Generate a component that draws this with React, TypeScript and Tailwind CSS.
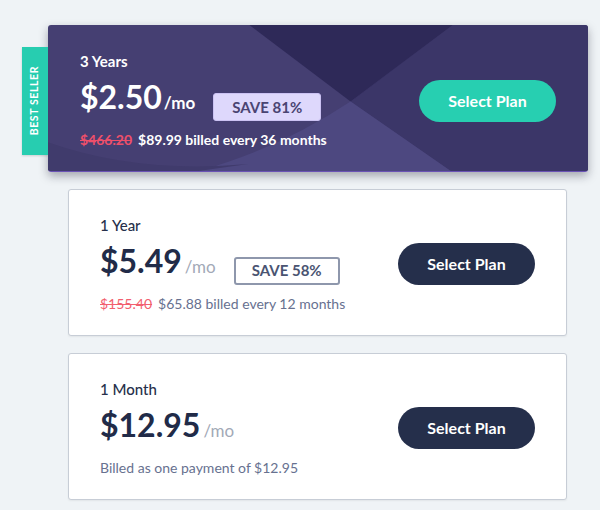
import React from 'react';

type Plan = {
  label: string;
  price: string;
  save?: string;
  old?: string;
  billed: string;
};

const plans: Plan[] = [
  { label: '1 Year', price: '$5.49', save: 'SAVE 58%', old: '$155.40', billed: '$65.88 billed every 12 months' },
  { label: '1 Month', price: '$12.95', billed: 'Billed as one payment of $12.95' },
];

function CardBackground() {
  return (
    <svg className="absolute inset-0 h-full w-full" viewBox="0 0 539 147" preserveAspectRatio="none">
      <rect width="539" height="147" fill="#453f72" />
      <path d="M404,0 L539,0 L539,147 L402,147 L302,77 Z" fill="#3b3668" />
      <path d="M201,0 L404,0 L302,77 Z" fill="#2e2958" />
      <path d="M302,77 L402,147 L150,147 Q230,125 302,77 Z" fill="#4d4880" />
      <path d="M0,118 Q90,150 200,140 L150,147 L0,147 Z" fill="#403b6c" />
    </svg>
  );
}

function SelectButton({ featured }: { featured?: boolean }) {
  return (
    <button
      className={
        featured
          ? 'mt-[2px] h-[42px] w-[137px] shrink-0 rounded-full bg-[#27cfb1] text-[16px] font-bold text-white'
          : 'mt-[1px] h-[42px] w-[137px] shrink-0 rounded-full bg-[#252f4b] text-[16px] font-bold text-white'
      }
    >
      Select Plan
    </button>
  );
}

function FeaturedCard() {
  return (
    <div className="relative -ml-[20px] -mr-[21px] h-[147px] rounded-[3px] shadow-[0_4px_10px_rgba(20,20,40,0.35)]">
      <div className="absolute -left-[26px] top-[22px] flex h-[108px] w-[26px] items-center justify-center bg-[#27cdb0] shadow-[0_1px_2px_rgba(0,0,0,0.15)]">
        <span className="rotate-180 text-[10.5px] font-bold tracking-[0.6px] text-white [writing-mode:vertical-rl]">
          BEST SELLER
        </span>
      </div>
      <div className="relative h-full overflow-hidden rounded-[3px] border-b border-[#6a52b5]">
        <CardBackground />
        <div className="relative flex h-full items-center justify-between px-[32px] pt-[4px]">
          <div className="flex flex-col">
            <div className="text-[15px] font-bold leading-[20px] text-white">3 Years</div>
            <div className="mt-[6px] flex items-end">
              <div className="flex items-baseline leading-[40px]">
                <span className="text-[32px] font-bold text-white">$2.50</span>
                <span className="ml-[2px] text-[17px] font-bold text-white">/mo</span>
              </div>
              <div className="mb-[2px] ml-[18px] flex h-[28px] w-[108px] items-center justify-center rounded-[3px] border border-[#cbc2f3] bg-[#ded8fc] text-[15px] font-bold text-[#4a4472]">
                SAVE 81%
              </div>
            </div>
            <div className="mt-[8px] flex text-[14px] font-bold leading-[18px]">
              <span className="text-[#ee4f6a] line-through">$466.20</span>
              <span className="ml-[6px] text-white">$89.99 billed every 36 months</span>
            </div>
          </div>
          <SelectButton featured />
        </div>
      </div>
    </div>
  );
}

function PlanCard({ plan }: { plan: Plan }) {
  return (
    <div className="flex h-[147px] items-center justify-between rounded-[3px] border border-[#c7cdd6] bg-white px-[31px] pt-[2px] shadow-[0_1px_2px_rgba(0,0,0,0.06)]">
      <div className="flex flex-col">
        <div className="text-[15px] font-medium leading-[20px] text-[#27304b]">{plan.label}</div>
        <div className="mt-[6px] flex items-end">
          <div className="flex items-baseline leading-[40px]">
            <span className="text-[32px] font-bold text-[#212b48]">{plan.price}</span>
            <span className="ml-[3px] text-[17px] text-[#a2a9b7]">/mo</span>
          </div>
          {plan.save && (
            <div className="mb-[2px] ml-[18px] flex h-[28px] w-[106px] items-center justify-center rounded-[3px] border-2 border-[#8e97ac] text-[15px] font-bold text-[#4a5472]">
              {plan.save}
            </div>
          )}
        </div>
        <div className="mt-[8px] flex text-[14px] leading-[18px]">
          {plan.old && <span className="mr-[6px] text-[#f2606f] line-through">{plan.old}</span>}
          <span className="text-[#677190]">{plan.billed}</span>
        </div>
      </div>
      <SelectButton />
    </div>
  );
}

export default function App() {
  return (
    <div className="min-h-screen bg-[#eff3f6] pt-[25px] font-['Lato',sans-serif]">
      <div className="ml-[68px] flex w-[499px] flex-col gap-[17px]">
        <FeaturedCard />
        {plans.map((p) => (
          <PlanCard key={p.label} plan={p} />
        ))}
      </div>
    </div>
  );
}
